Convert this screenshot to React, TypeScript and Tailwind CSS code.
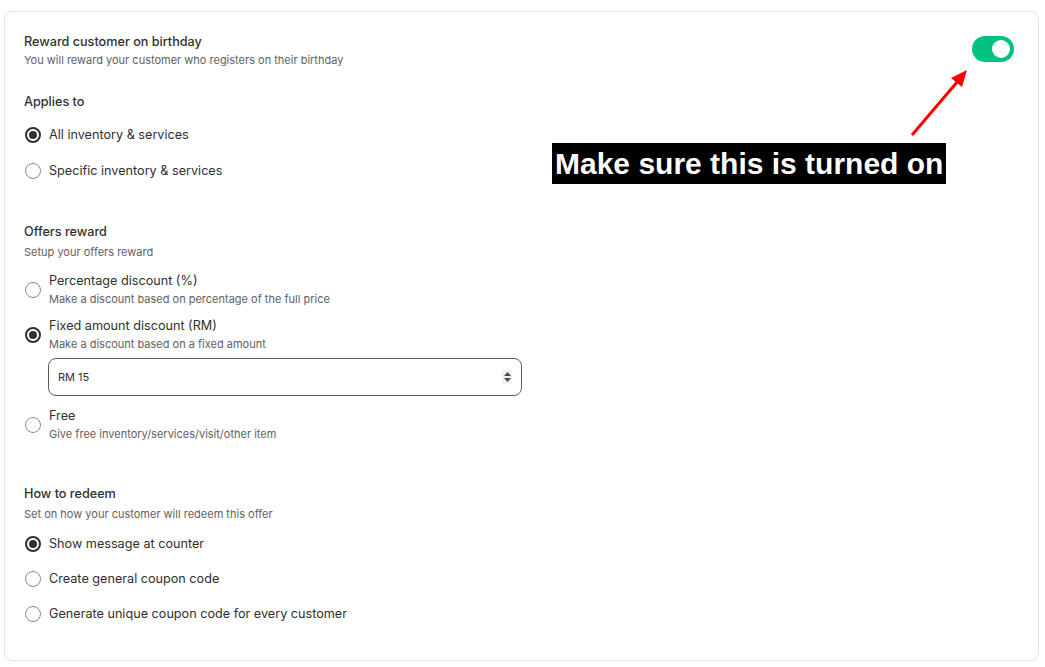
import React from "react";

const Radio = ({ checked }: { checked?: boolean }) => (
  <span
    className={
      "flex h-4 w-4 shrink-0 items-center justify-center rounded-full bg-white " +
      (checked ? "border-2 border-[#303030]" : "border border-[#8a8a8a]")
    }
  >
    {checked && <span className="h-2 w-2 rounded-full bg-[#303030]" />}
  </span>
);

const Option = ({ label, checked }: { label: string; checked?: boolean }) => (
  <div className="flex h-5 items-center gap-2 pl-[1px]">
    <Radio checked={checked} />
    <span className="text-[12.65px] text-[#303030]">{label}</span>
  </div>
);

const DescOption = ({
  label,
  desc,
  checked,
}: {
  label: string;
  desc: string;
  checked?: boolean;
}) => (
  <div className="flex items-center gap-2 pl-[1px]">
    <Radio checked={checked} />
    <div className="flex flex-col">
      <span className="text-[12.65px] leading-[18px] text-[#303030]">{label}</span>
      <span className="text-[11px] leading-[18px] text-[#616161]">{desc}</span>
    </div>
  </div>
);

const App = () => {
  return (
    <div
      className="min-h-screen bg-white pl-1 pr-[6px] pt-[11px]"
      style={{ fontFamily: "Inter, 'Noto Sans', sans-serif" }}
    >
      <div className="relative h-[650px] rounded-lg border border-[#e3e3e3] bg-white px-[19px] pt-[21px]">
        {/* header */}
        <div className="flex items-start justify-between">
          <div>
            <div className="text-[12.65px] font-[550] leading-[18px] text-[#303030]">
              Reward customer on birthday
            </div>
            <div className="text-[11px] leading-[18px] text-[#616161]">
              You will reward your customer who registers on their birthday
            </div>
          </div>
          <div className="mr-[5px] mt-[3px] flex h-[26px] w-[42px] items-center justify-end rounded-full bg-[#00c37f] pr-[2px]">
            <span className="h-[22px] w-[22px] rounded-full border-2 border-[#00c37f] bg-white" />
          </div>
        </div>

        {/* applies to */}
        <div className="mt-[24px] text-[12.65px] font-[550] leading-[18px] text-[#303030]">
          Applies to
        </div>
        <div className="mt-[14px] flex flex-col gap-4">
          <Option label="All inventory & services" checked />
          <Option label="Specific inventory & services" />
        </div>

        {/* offers reward */}
        <div className="mt-[42px] text-[12.65px] font-[550] leading-[18px] text-[#303030]">
          Offers reward
        </div>
        <div className="mt-[2px] text-[11px] leading-[18px] text-[#616161]">
          Setup your offers reward
        </div>
        <div className="mt-[11px] flex flex-col">
          <DescOption
            label="Percentage discount (%)"
            desc="Make a discount based on percentage of the full price"
          />
          <div className="mt-[9px]">
            <DescOption
              label="Fixed amount discount (RM)"
              desc="Make a discount based on a fixed amount"
              checked
            />
          </div>
          <div className="ml-[24px] mt-[5px] flex h-[38px] w-[474px] items-center justify-between rounded-lg border border-[#5c5c5c] pl-[9px] pr-[9px]">
            <span className="text-[11px] text-[#303030]">RM 15</span>
            <span className="flex h-[14px] w-[10px] flex-col items-center justify-center gap-[2px] bg-[#f1f1f1]">
              <svg width="7" height="4" viewBox="0 0 7 4">
                <path d="M3.5 0 L7 4 L0 4 Z" fill="#4a4a4a" />
              </svg>
              <svg width="7" height="4" viewBox="0 0 7 4">
                <path d="M0 0 L7 0 L3.5 4 Z" fill="#4a4a4a" />
              </svg>
            </span>
          </div>
          <div className="mt-[11px]">
            <DescOption
              label="Free"
              desc="Give free inventory/services/visit/other item"
            />
          </div>
        </div>

        {/* how to redeem */}
        <div className="mt-[42px] text-[12.65px] font-[550] leading-[18px] text-[#303030]">
          How to redeem
        </div>
        <div className="mt-[2px] text-[11px] leading-[18px] text-[#616161]">
          Set on how your customer will redeem this offer
        </div>
        <div className="mt-[11px] flex flex-col gap-[15px]">
          <Option label="Show message at counter" checked />
          <Option label="Create general coupon code" />
          <Option label="Generate unique coupon code for every customer" />
        </div>

        {/* annotation */}
        <svg
          className="absolute left-[895px] top-[50px]"
          width="80"
          height="80"
          viewBox="0 0 80 80"
        >
          <line x1="12" y1="73" x2="58" y2="19" stroke="#ff0000" strokeWidth="3" />
          <path d="M67 8 L62 25 L51 16 Z" fill="#ff0000" />
        </svg>
        <div
          className="absolute left-[547px] top-[131px] flex h-[41px] items-center bg-black px-[3px] text-[30px] font-bold text-white"
          style={{ fontFamily: "'Liberation Sans', Arial, sans-serif" }}
        >
          Make sure this is turned on
        </div>
      </div>
    </div>
  );
};

export default App;
